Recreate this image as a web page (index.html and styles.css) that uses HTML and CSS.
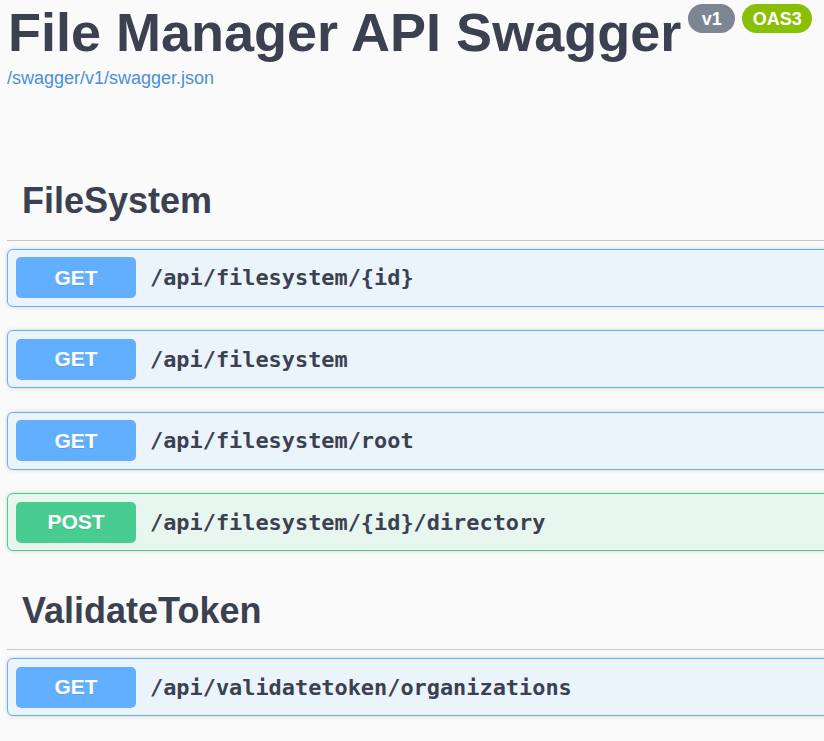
FILE: index.html
```html
<!DOCTYPE html>
<html lang="en">
<head>
<meta charset="utf-8">
<title>File Manager API Swagger</title>
<link rel="stylesheet" href="styles.css">
</head>
<body>
<div class="info">
  <h1 class="title">
    <span class="title-text">File Manager API Swagger</span>
    <span class="badge badge-version">v1</span>
    <span class="badge badge-oas">OAS3</span>
  </h1>
  <a class="spec-link" href="#">/swagger/v1/swagger.json</a>
</div>

<div class="tags">
  <section class="tag first">
    <h3 class="tag-name">FileSystem</h3>
    <div class="op op-get"><span class="method">GET</span><span class="path">/api/filesystem/{id}</span></div>
    <div class="op op-get"><span class="method">GET</span><span class="path">/api/filesystem</span></div>
    <div class="op op-get"><span class="method">GET</span><span class="path">/api/filesystem/root</span></div>
    <div class="op op-post"><span class="method">POST</span><span class="path">/api/filesystem/{id}/directory</span></div>
  </section>
  <section class="tag">
    <h3 class="tag-name">ValidateToken</h3>
    <div class="op op-get"><span class="method">GET</span><span class="path">/api/validatetoken/organizations</span></div>
  </section>
</div>
</body>
</html>
```

FILE: styles.css
```css
html, body {
  margin: 0;
  padding: 0;
  background: #fafafa;
  overflow: hidden;
}

body {
  font-family: "Liberation Sans", Arial, sans-serif;
  color: #3b4151;
  width: 824px;
  height: 741px;
}

.info {
  padding: 0 0 0 8px;
}

.title {
  display: flex;
  align-items: flex-start;
  margin: 0;
  font-size: 54px;
  line-height: 1.2;
  font-weight: 700;
  color: #3b4151;
}

.title-text {
  margin-right: 7px;
}

.badge {
  display: flex;
  align-items: center;
  justify-content: center;
  height: 29px;
  margin-top: 4px;
  border-radius: 15px;
  color: #fff;
  font-size: 18px;
  font-weight: 700;
  line-height: 1;
}

.badge-version {
  width: 47px;
  background: #7d8492;
}

.badge-oas {
  width: 70px;
  margin-left: 7px;
  background: #89bf04;
}

.spec-link {
  display: block;
  margin-top: 3px;
  margin-left: -1px;
  font-size: 18px;
  line-height: 1.2;
  color: #4a8fd8;
  text-decoration: none;
}

.tags {
  margin-left: 7px;
  width: 850px;
}

.tag.first {
  padding-top: 90px;
}

.tag {
  padding-top: 38px;
}

.tag-name {
  margin: 0 0 8px;
  padding: 0 0 17px 15px;
  font-size: 36px;
  line-height: 1.2;
  font-weight: 700;
  border-bottom: 1px solid #c4c6cb;
}

.op {
  display: flex;
  align-items: center;
  box-sizing: border-box;
  height: 58px;
  margin-bottom: 23.5px;
  padding: 0 8px;
  border: 1px solid;
  border-radius: 6px;
  box-shadow: 0 0 4px rgba(0, 0, 0, 0.16);
}

.tag .op:last-child {
  margin-bottom: 0;
}

.op-get {
  background: #ebf3fb;
  border-color: #61affe;
}

.op-post {
  background: #e8f6f0;
  border-color: #49cc90;
}

.method {
  display: flex;
  align-items: center;
  justify-content: center;
  width: 120px;
  height: 41px;
  border-radius: 5px;
  color: #fff;
  font-size: 21px;
  font-weight: 700;
  text-shadow: 0 1px 0 rgba(0, 0, 0, 0.1);
}

.op-get .method {
  background: #61affe;
}

.op-post .method {
  background: #49cc90;
}

.path {
  margin-left: 14px;
  font-family: "DejaVu Sans Mono", "Liberation Mono", monospace;
  font-size: 21.9px;
  font-weight: 700;
  color: #3b4151;
}
```
